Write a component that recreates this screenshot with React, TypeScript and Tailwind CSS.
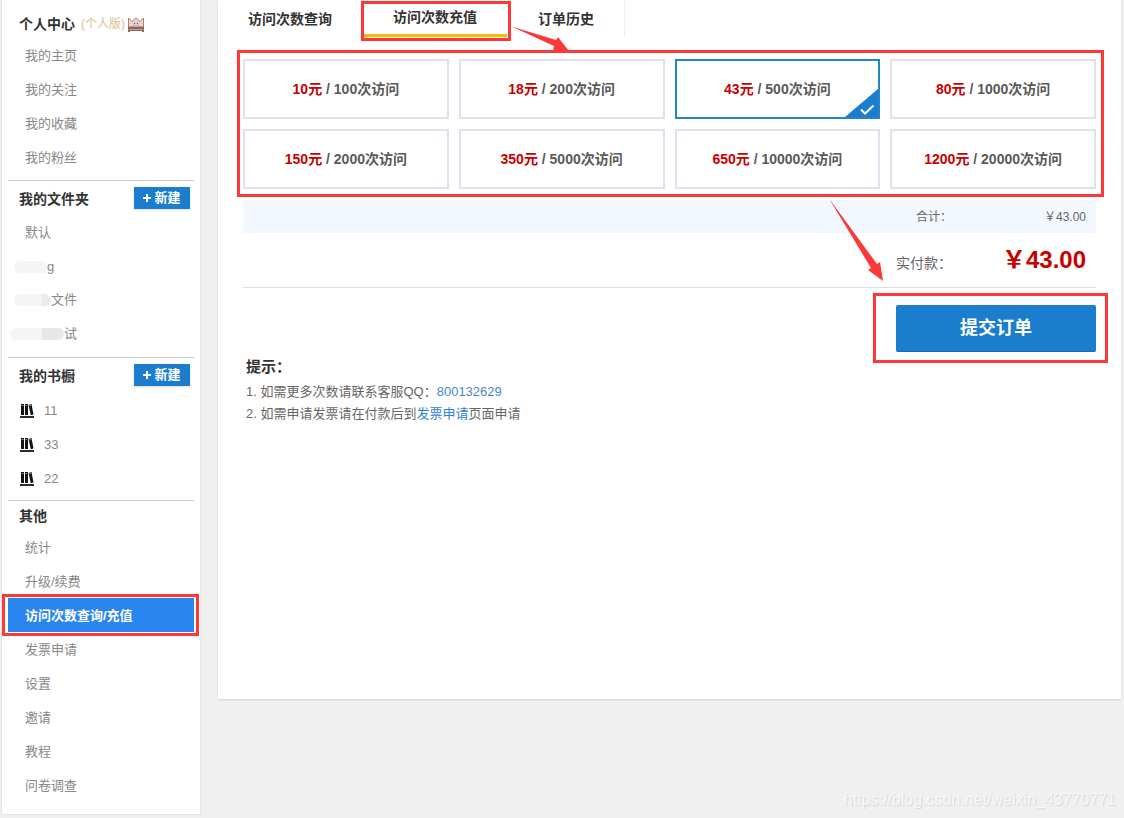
import { useState } from 'react';
import clsx from 'clsx';

const plans = [
  { price: 10, visits: 100 },
  { price: 18, visits: 200 },
  { price: 43, visits: 500 },
  { price: 80, visits: 1000 },
  { price: 150, visits: 2000 },
  { price: 350, visits: 5000 },
  { price: 650, visits: 10000 },
  { price: 1200, visits: 20000 },
];

const personalLinks = ['我的主页', '我的关注', '我的收藏', '我的粉丝'];
const shelves = ['11', '33', '22'];
const otherLinks = ['统计', '升级/续费', '访问次数查询/充值', '发票申请', '设置', '邀请', '教程', '问卷调查'];
const activeLink = '访问次数查询/充值';

function CrownIcon() {
  return (
    <svg width="16" height="15" viewBox="0 0 16 15" aria-hidden="true">
      <path d="M0.5 1 L4 4.500 L8 0.8 L12 4.500 L15.5 1 V11 H0.5 Z" fill="#efd3c8" stroke="#ad8074" />
      <path d="M4 8 L6 5.500 H10 L12 8 V9 H4 Z" fill="#c5cad6" />
      <path d="M6 6 H7 V7 H6 Z M9 6 H10 V7 H9 Z" fill="#6d5a63" />
      <path d="M0 9.500 H16 V14 H0 Z" fill="#93655b" />
      <path d="M1 12 H15 V13 H1 Z" fill="#c79a8c" />
      <path d="M0 14 H2 V15 H0 Z M14 14 H16 V15 H14 Z" fill="#93655b" />
    </svg>
  );
}

function BooksIcon() {
  return (
    <svg width="14" height="14" viewBox="0 0 14 14" aria-hidden="true">
      <path d="M1 0 H4 V11 H1 Z M5 0 H8 V11 H5 Z M8.500 1 L11.500 0 L13.500 10.500 L10.800 11.300 Z" fill="#151212" />
      <path d="M1.500 1 H3.500 V2 H1.500 Z M5.500 1 H7.500 V2 H5.500 Z M9 1.600 L10.900 1 L11.100 2 L9.300 2.600 Z" fill="#8f7f80" />
      <path d="M0 12 H14 V14 H0 Z" fill="#2b2b2b" />
    </svg>
  );
}

function SideLink({ label, active }: { label: string; active?: boolean }) {
  return (
    <li className="relative">
      <a
        href="#"
        className={clsx('flex h-[34px] items-center pt-0.5 pl-[17px] text-[13px]', active ? 'bg-[#2b85ee] font-bold text-white' : 'text-[#888]')}
      >
        {label}
      </a>
      {active && <span className="pointer-events-none absolute -top-1 -right-[5px] -bottom-1 -left-1.5 border-3 border-[#fd3839]" />}
    </li>
  );
}

function SectionHeader({ title }: { title: string }) {
  return (
    <div className="flex h-[34px] items-center justify-between pr-1 pl-[11px]">
      <h2 className="pt-0.5 text-sm font-bold text-[#333]">{title}</h2>
      <button type="button" className="flex h-[22px] w-14 items-center justify-center gap-[3px] bg-[#1b7dcd] text-[13px] font-bold text-white shadow-sm">
        <svg width="8" height="8" viewBox="0 0 8 8" aria-hidden="true">
          <path d="M3 0 H5 V3 H8 V5 H5 V8 H3 V5 H0 V3 H3 Z" fill="#fff" />
        </svg>
        新建
      </button>
    </div>
  );
}

function Sidebar() {
  return (
    <aside className="w-[200px] shrink-0 border border-t-0 border-[#e6e6e6] bg-white px-1.5 pb-3">
      <section className="pb-1.5">
        <div className="flex h-[38px] items-center pt-2.5 pl-[11px]">
          <h2 className="text-sm font-bold text-[#333]">个人中心</h2>
          <span className="mr-[3px] ml-1.5 text-xs text-[#dcc08b]">(个人版)</span>
          <CrownIcon />
        </div>
        <ul>
          {personalLinks.map((label) => <SideLink key={label} label={label} />)}
        </ul>
      </section>

      <section className="border-t border-[#c9c9c9] pb-1.5">
        <SectionHeader title="我的文件夹" />
        <ul className="text-[13px] text-[#888]">
          <SideLink label="默认" />
          <li>
            <a href="#" className="flex h-[34px] items-center pt-0.5 pl-1.5">
              <span className="h-3 w-[33px] rounded-full bg-[#f5f5f5]" />g
            </a>
          </li>
          <li>
            <a href="#" className="flex h-[34px] items-center pl-1.5">
              <span className="h-3 w-[37px] rounded-full bg-linear-to-r from-[#f5f5f5] from-75% to-[#ebebeb] to-75%" />文件
            </a>
          </li>
          <li>
            <a href="#" className="flex h-[34px] items-center pl-0.5">
              <span className="h-3 w-[54px] rounded-full bg-linear-to-r from-[#f5f5f5] from-60% to-[#e8e8e8] to-60%" />试
            </a>
          </li>
        </ul>
      </section>

      <section className="border-t border-[#c9c9c9] pb-1.5">
        <SectionHeader title="我的书橱" />
        <ul>
          {shelves.map((name) => (
            <li key={name}>
              <a href="#" className="flex h-[34px] items-center gap-2.5 pt-1 pl-3 text-[13px] text-[#888]">
                <BooksIcon />
                {name}
              </a>
            </li>
          ))}
        </ul>
      </section>

      <section className="border-t border-[#c9c9c9]">
        <h2 className="flex h-[29px] items-center pl-[11px] text-sm font-bold text-[#333]">其他</h2>
        <ul>
          {otherLinks.map((label) => <SideLink key={label} label={label} active={label === activeLink} />)}
        </ul>
      </section>
    </aside>
  );
}

function Tabs() {
  return (
    <nav className="relative flex h-[37px] text-sm font-bold text-[#333]">
      <a href="#" className="flex items-center border-r border-transparent px-[30px]">访问次数查询</a>
      <a href="#" className="relative flex items-center px-[30px]">
        <span className="pb-[3px]">访问次数充值</span>
        <span className="absolute right-0 bottom-0 left-0 h-[3px] bg-[#ffb800]" />
        <span className="pointer-events-none absolute top-px -right-1 -bottom-1 -left-0.5 border-3 border-[#fd3839]" />
      </a>
      <a href="#" className="flex items-center border-x border-l-transparent border-r-[#eee] px-[30px]">订单历史</a>
      <svg className="pointer-events-none absolute top-[26px] left-[293px]" width="60" height="26" viewBox="0 0 60 26" aria-hidden="true">
        <path d="M0.500 0.500 L45 14 L47 11 L58 25 L42 25 L43 20 Z" fill="#fd3839" />
      </svg>
    </nav>
  );
}

export default function App() {
  const [selected, setSelected] = useState(2);
  const total = plans[selected].price.toFixed(2);

  return (
    <div className="relative flex min-h-screen items-start gap-[17px] bg-[#f0f0f0] pr-[3px] pb-[3px] pl-px font-['Liberation_Sans','Noto_Sans_CJK_SC',sans-serif]">
      <Sidebar />

      <main className="min-h-[699px] flex-1 bg-white shadow-[0_1px_2px_rgba(0,0,0,0.12)]">
        <Tabs />

        <form className="px-[25px]" onSubmit={(e) => e.preventDefault()}>
          <fieldset className="relative mt-[22px]">
            <div className="grid grid-cols-4 gap-2.5">
              {plans.map((plan, i) => (
                <label
                  key={plan.price}
                  className={clsx(
                    'relative flex h-[60px] cursor-pointer items-center justify-center border-2 text-sm font-bold text-[#595959]',
                    i === selected ? 'border-[#2185ca]' : 'border-[#dde3ed]'
                  )}
                >
                  <input type="radio" name="plan" className="sr-only" checked={i === selected} onChange={() => setSelected(i)} />
                  <span><span className="text-[#c80000]">{plan.price}元</span> / {plan.visits}次访问</span>
                  {i === selected && (
                    <svg className="absolute right-0 bottom-0" width="33" height="28" viewBox="0 0 33 28" aria-hidden="true">
                      <path d="M33 0 V28 H0 Z" fill="#1b7dcd" />
                      <path d="M16 20.500 L20 24.500 L28.500 16.500" fill="none" stroke="#fff" strokeWidth="2" />
                    </svg>
                  )}
                </label>
              ))}
            </div>
            <span className="pointer-events-none absolute -top-[9px] -right-2 -bottom-2 -left-1.5 border-3 border-[#fd3839]" />
          </fieldset>

          <div className="relative mt-[11px]">
            <div className="flex h-[33px] items-center justify-end bg-[#f3f7ff] text-xs text-[#666]">
              <div className="flex w-[200px] justify-between pr-2.5 pl-5">
                <span>合计：</span>
                <span>￥{total}</span>
              </div>
            </div>
            <div className="flex h-[55px] items-center justify-end border-b border-[#dedfe4]">
              <div className="flex w-[200px] items-baseline justify-between pr-2.5">
                <span className="text-sm text-[#666]">实付款：</span>
                <strong className="text-2xl text-[#c80000]">￥{total}</strong>
              </div>
            </div>
            <svg className="pointer-events-none absolute -top-0.5 right-[212px]" width="56" height="84" viewBox="0 0 56 84" aria-hidden="true">
              <path d="M1 0.500 L49 66 L52 64 L55 83 L40 72 L43 70 Z" fill="#fd3839" />
            </svg>
          </div>

          <div className="mt-[17px] flex justify-end">
            <div className="relative w-[200px]">
              <button type="submit" className="h-[47px] w-full rounded-xs border-b border-[#1468ae] bg-[#1b7dcd] text-lg font-bold text-white">
                提交订单
              </button>
              <span className="pointer-events-none absolute -top-3 -right-3 -bottom-[11px] -left-[23px] border-3 border-[#fd3839]" />
            </div>
          </div>
        </form>

        <section className="px-7 pt-1 text-[13px] text-[#666]">
          <h3 className="text-[15px] leading-[22px] font-bold text-[#333]">提示：</h3>
          <ol className="mt-[3px] list-inside list-decimal leading-[22px]">
            <li>如需更多次数请联系客服QQ：<a href="#" className="text-[#4a86c8]">800132629</a></li>
            <li>如需申请发票请在付款后到<a href="#" className="text-[#2f83d0]">发票申请</a>页面申请</li>
          </ol>
        </section>
      </main>

      <p className="absolute right-2 bottom-1.5 text-base text-[#f8f8f8] [text-shadow:1px_1px_1px_#d4d4d4]">https://blog.csdn.net/weixin_43770771</p>
    </div>
  );
}
